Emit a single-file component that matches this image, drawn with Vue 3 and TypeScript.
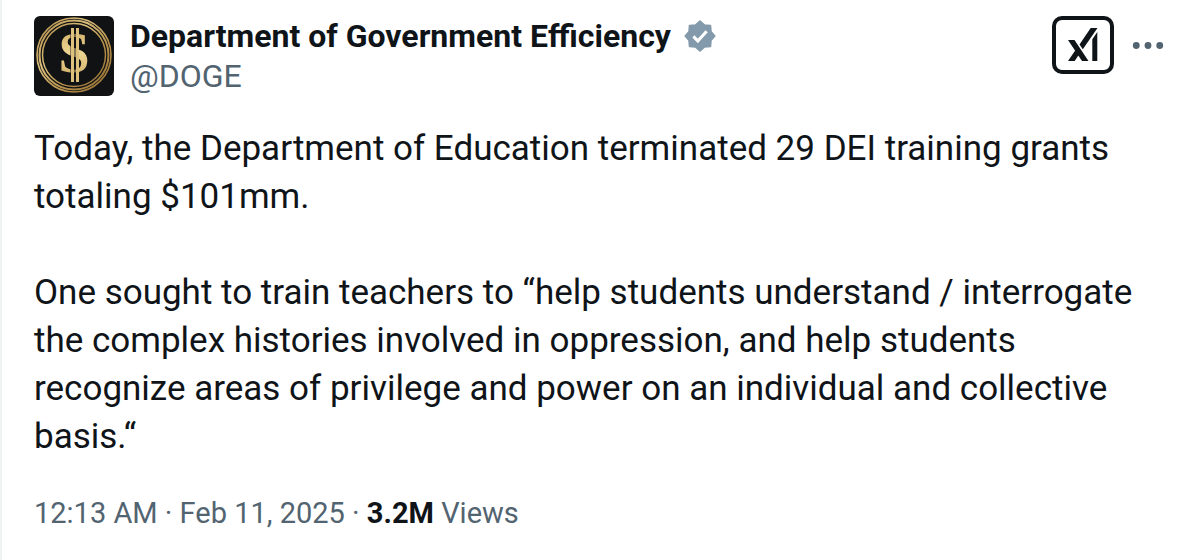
<script setup lang="ts">
interface Post {
  name: string
  handle: string
  paragraphs: string[]
  time: string
  date: string
  views: string
}

const post: Post = {
  name: 'Department of Government Efficiency',
  handle: '@DOGE',
  paragraphs: [
    'Today, the Department of Education terminated 29 DEI training grants\ntotaling $101mm.',
    'One sought to train teachers to “help students understand / interrogate\nthe complex histories involved in oppression, and help students\nrecognize areas of privilege and power on an individual and collective\nbasis.“',
  ],
  time: '12:13 AM',
  date: 'Feb 11, 2025',
  views: '3.2M',
}
</script>

<template>
  <article class="post">
    <header class="head">
      <svg class="avatar" viewBox="0 0 80 80" role="img" aria-label="Gold dollar coin">
        <defs>
          <linearGradient id="gold" x1="0" y1="0" x2="1" y2="1">
            <stop offset="0" stop-color="#b08a45" />
            <stop offset="0.35" stop-color="#dcc07c" />
            <stop offset="0.65" stop-color="#b8924c" />
            <stop offset="1" stop-color="#8f6c31" />
          </linearGradient>
          <linearGradient id="shine" x1="0" y1="0" x2="0" y2="1">
            <stop offset="0" stop-color="#c9a45a" />
            <stop offset="0.5" stop-color="#ecd492" />
            <stop offset="1" stop-color="#c9a45a" />
          </linearGradient>
        </defs>
        <rect width="80" height="80" rx="6" fill="#111214" />
        <g fill="none" stroke="url(#gold)">
          <circle cx="40" cy="39" r="37" stroke-width="1.600" />
          <circle cx="40" cy="39" r="34.500" stroke-width="2" />
          <circle cx="40" cy="39" r="31.500" stroke-width="1.500" />
        </g>
        <text class="coin-letter" x="40" y="56" text-anchor="middle" fill="url(#shine)">S</text>
        <path d="M36 12h9v54h-9z" fill="#111214" opacity="0.450" />
        <path d="M37 12h3v54h-3zM42 12h3v54h-3z" fill="#dcc07c" />
      </svg>

      <div class="author">
        <div class="name-row">
          <strong class="name">{{ post.name }}</strong>
          <svg class="badge" viewBox="0 0 22 22" role="img" aria-label="Verified account">
            <path
              fill="#829aab"
              stroke="#829aab"
              stroke-width="1.200"
              stroke-linejoin="round"
              d="M11 1.500 13.900 4 17.700 4.300 18 8.100 20.500 11 18 13.900 17.700 17.700 13.900 18 11 20.500 8.100 18 4.300 17.700 4 13.900 1.500 11 4 8.100 4.300 4.300 8.100 4z"
            />
            <path fill="none" stroke="#fff" stroke-width="2" d="m6.700 11.300 2.900 2.900 5.700-6.300" />
          </svg>
        </div>
        <span class="handle">{{ post.handle }}</span>
      </div>

      <div class="actions">
        <button class="grok" type="button" aria-label="Explain this post">
          <svg viewBox="0 0 30 34" aria-hidden="true">
            <path
              d="M0 12h6.500L20.500 33H14zM0 33l7.200-10.500 3.300 4.800L6.700 33zM11.500 16.500 22.700 0h6.800L14.800 21.300zM24.300 11.300l5-7.300v29h-5z"
            />
          </svg>
        </button>
        <button class="more" type="button" aria-label="More">
          <svg viewBox="0 0 30 8" aria-hidden="true">
            <circle cx="4" cy="4" r="3.200" />
            <circle cx="15" cy="4" r="3.200" />
            <circle cx="26" cy="4" r="3.200" />
          </svg>
        </button>
      </div>
    </header>

    <div class="body">
      <p v-for="text in post.paragraphs" :key="text">{{ text }}</p>
    </div>

    <footer class="meta">
      {{ post.time }} · {{ post.date }} · <strong>{{ post.views }}</strong> Views
    </footer>
  </article>
</template>

<style>
body {
  margin: 0;
  background: #fff;
}
</style>

<style scoped>
.post {
  box-sizing: border-box;
  min-height: 100vh;
  padding: 16px 32px 24px;
  border-left: 2px solid #eff3f4;
  font-family: Roboto, "Liberation Sans", sans-serif;
  color: #0f1419;
}
.head {
  display: flex;
  gap: 16px;
}
.avatar {
  flex: none;
  width: 80px;
  height: 80px;
}
.coin-letter {
  font: 700 56px "Liberation Serif", serif;
}
.author {
  flex: 1;
  line-height: 40px;
}
.name-row {
  display: flex;
  align-items: center;
  gap: 12px;
}
.name {
  font-size: 32px;
  font-weight: 700;
}
.badge {
  width: 34px;
  height: 34px;
}
.handle {
  display: block;
  font-size: 32px;
  color: #536471;
}
.actions {
  display: flex;
  align-items: flex-start;
  gap: 18px;
}
button {
  padding: 0;
  background: none;
  border: 0;
  cursor: pointer;
}
.grok {
  display: flex;
  align-items: center;
  justify-content: center;
  width: 62px;
  height: 58px;
  border: 4px solid #0f1419;
  border-radius: 10px;
}
.grok svg {
  flex: none;
  width: 30px;
  height: 34px;
  fill: #0f1419;
}
.more {
  display: flex;
  align-items: center;
  height: 58px;
}
.more svg {
  width: 32px;
  height: 9px;
  fill: #536471;
}
.body {
  display: flex;
  flex-direction: column;
  gap: 48px;
  margin-top: 29px;
  font-size: 35px;
  line-height: 48px;
}
.body p {
  margin: 0;
  white-space: pre-line;
}
.meta {
  margin-top: 32px;
  font-size: 29px;
  line-height: 40px;
  color: #536471;
}
.meta strong {
  color: #0f1419;
}
</style>
